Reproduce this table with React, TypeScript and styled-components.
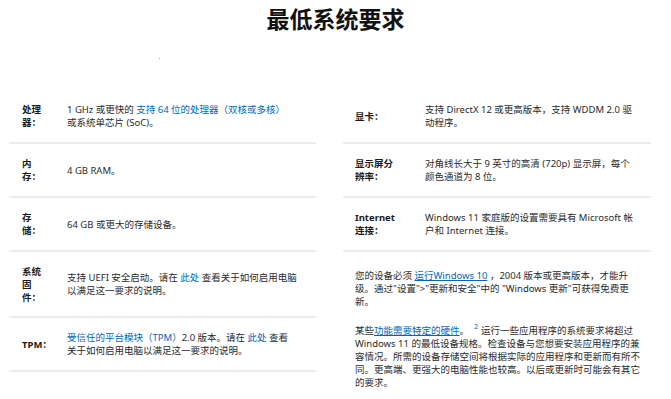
import React from "react";
import styled, { createGlobalStyle } from "styled-components";

const Global = createGlobalStyle`
  html, body { margin: 0; padding: 0; background: #fff; }
  body {
    font-family: "Noto Sans", "Noto Sans CJK SC", sans-serif;
    color: #262626;
    -webkit-font-smoothing: antialiased;
  }
`;

const Page = styled.div`
  width: 671px;
  height: 399px;
  overflow: hidden;
  box-sizing: border-box;
`;

const Header = styled.header`
  height: 90px;
  box-sizing: border-box;
  padding-top: 3px;
  display: flex;
  flex-direction: column;
`;

const Title = styled.h1`
  margin: 0;
  text-align: center;
  font-family: "Noto Sans CJK SC", sans-serif;
  font-size: 23px;
  line-height: 30px;
  font-weight: 600;
  color: #111;
`;

const Dot = styled.span`
  display: block;
  width: 1px;
  height: 1px;
  margin: 25px 0 0 159px;
  background: #aaa;
`;

const Columns = styled.div`
  display: grid;
  grid-template-columns: 307px 308px;
  column-gap: 27px;
  padding-left: 9px;
  align-items: start;
`;

const Column = styled.div`
  display: flex;
  flex-direction: column;
`;

const Row = styled.div<{ $labelW: number; $gap: number; $padL: number; $padR: number }>`
  display: grid;
  grid-template-columns: ${(p) => p.$labelW}px minmax(0, 1fr);
  column-gap: ${(p) => p.$gap}px;
  align-items: center;
  min-height: 27px;
  padding: 12.5px ${(p) => p.$padR}px 12.5px ${(p) => p.$padL}px;
  border-bottom: 2px solid #ececec;
  font-family: "Noto Sans", "Noto Sans CJK SC", sans-serif;
  font-size: 9.5px;
  line-height: 13px;
`;

const Label = styled.div`
  font-weight: 700;
  color: #1a1a1a;
`;

const Value = styled.div`
  color: #2b2b2b;
`;

const Link = styled.a<{ $underline?: boolean }>`
  color: #0067b8;
  text-decoration: ${(p) => (p.$underline ? "underline" : "none")};
`;

const Para = styled.p`
  margin: 17px 0 0 0;
  padding: 0 8px 0 12px;
  font-family: "Noto Sans", "Noto Sans CJK SC", sans-serif;
  font-size: 9.5px;
  line-height: 13.2px;
  color: #2b2b2b;
  & + & { margin-top: 15px; }
`;

const Sup = styled.sup`
  color: #0067b8;
  font-size: 7px;
  line-height: 0;
  margin: 0 3px 0 5px;
`;

type Item = { label: string; value: React.ReactNode; padR?: number };

const left: Item[] = [
  {
    label: "处理器：",
    value: (
      <>
        1 GHz 或更快的 <Link>支持 64 位的处理器（双核或多核）</Link>或系统单芯片 (SoC)。
      </>
    ),
  },
  { label: "内存：", value: <>4 GB RAM。</> },
  { label: "存储：", value: <>64 GB 或更大的存储设备。</> },
  {
    label: "系统固件：",
    padR: 18,
    value: (
      <>
        支持 UEFI 安全启动。请在 <Link>此处</Link> 查看关于如何启用电脑以满足这一要求的说明。
      </>
    ),
  },
  {
    label: "TPM：",
    value: (
      <>
        <Link>受信任的平台模块（TPM）</Link>2.0 版本。请在 <Link>此处</Link> 查看关于如何启用电脑以满足这一要求的说明。
      </>
    ),
  },
];

const right: Item[] = [
  { label: "显卡：", value: <>支持 DirectX 12 或更高版本，支持 WDDM 2.0 驱动程序。</> },
  { label: "显示屏分辨率：", value: <>对角线长大于 9 英寸的高清 (720p) 显示屏，每个颜色通道为 8 位。</> },
  { label: "Internet 连接：", value: <>Windows 11 家庭版的设置需要具有 Microsoft 帐户和 Internet 连接。</> },
];

export default function App() {
  return (
    <Page>
      <Global />
      <Header>
        <Title>最低系统要求</Title>
        <Dot />
      </Header>
      <Columns>
        <Column>
          {left.map((r) => (
            <Row key={r.label} $labelW={20} $gap={25} $padL={13} $padR={r.padR ?? 22}>
              <Label>{r.label}</Label>
              <Value>{r.value}</Value>
            </Row>
          ))}
        </Column>
        <Column>
          {right.map((r) => (
            <Row key={r.label} $labelW={40} $gap={30} $padL={12} $padR={13}>
              <Label>{r.label}</Label>
              <Value>{r.value}</Value>
            </Row>
          ))}
          <Para>
            您的设备必须 <Link $underline>运行Windows 10</Link> ，2004 版本或更高版本，才能升级。通过"设置"&gt;"更新和安全"中的 "Windows 更新"可获得免费更新。
          </Para>
          <Para>
            某些<Link $underline>功能需要特定的硬件</Link>。<Sup>2</Sup>运行一些应用程序的系统要求将超过 Windows 11 的最低设备规格。检查设备与您想要安装应用程序的兼容情况。所需的设备存储空间将根据实际的应用程序和更新而有所不同。更高端、更强大的电脑性能也较高。以后或更新时可能会有其它的要求。
          </Para>
        </Column>
      </Columns>
    </Page>
  );
}
